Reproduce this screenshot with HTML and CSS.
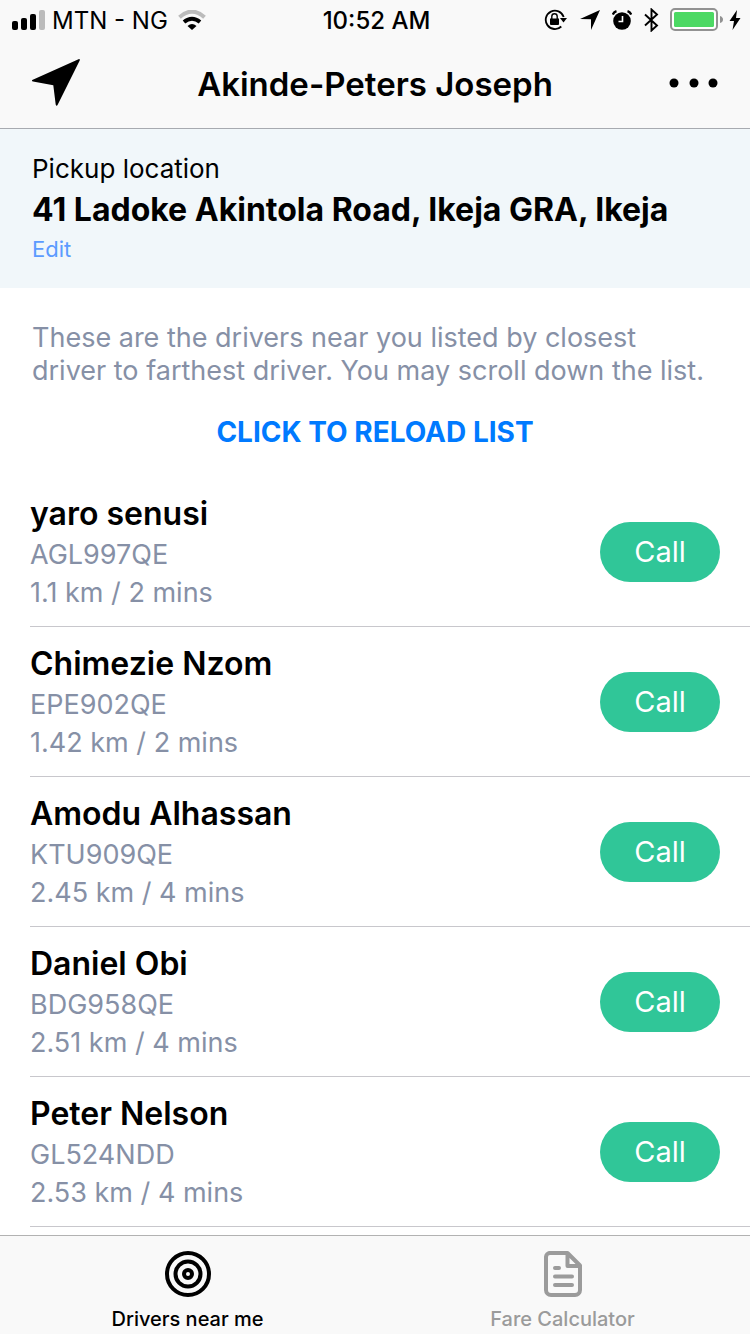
FILE: index.html
```
<!DOCTYPE html>
<html lang="en">
<head>
<meta charset="utf-8">
<meta name="viewport" content="width=device-width, initial-scale=1">
<title>Drivers near me</title>
<link rel="stylesheet" href="styles.css">
</head>
<body>
<div class="app">
  <header class="top">
    <div class="status">
      <div class="status-left">
        <svg class="icon" width="34" height="20" viewBox="0 0 34 20"><rect x="0" y="11" width="6" height="9" rx="2"/><rect x="9" y="8" width="6" height="12" rx="2"/><rect x="18" y="4" width="6" height="16" rx="2"/><rect x="27" y="0" width="6" height="20" rx="2" fill="#bbb"/></svg>
        <span>MTN - NG</span>
        <svg class="icon wifi" width="28" height="20" viewBox="0 0 28 20"><path d="M1.500 7.200Q14-4 26.500 7.200" fill="none" stroke="#bbb" stroke-width="4"/><path d="M6 12Q14 5.500 22 12" fill="none" stroke="#000" stroke-width="4"/><path d="M9.500 16Q14 12 18.500 16L14 20z"/></svg>
      </div>
      <time class="clock">10:52 AM</time>
      <div class="status-right">
        <svg class="icon" width="24" height="22" viewBox="0 0 24 22"><path d="M19.700 8A9.200 9.200 0 1 0 17.300 17.500" fill="none" stroke="#000" stroke-width="1.800"/><path d="M16 9h7l-3.500 4.500z"/><path d="M6 9.500h9V15a1 1 0 0 1-1 1H7a1 1 0 0 1-1-1z"/><path d="M7.800 10V7.500a2.700 2.700 0 0 1 5.400 0V10" fill="none" stroke="#000" stroke-width="1.400"/></svg>
        <svg class="icon arrow" width="20" height="20" viewBox="0 0 20 20"><path d="M20 0L11 20V9.300L0 9z"/></svg>
        <svg class="icon alarm" width="20" height="20" viewBox="0 0 20 20"><circle cx="10" cy="11" r="8.800"/><path d="M.800 4.500A6 6 0 0 1 4.500 1.200M19.200 4.500A6 6 0 0 0 15.500 1.200" fill="none" stroke="#000" stroke-width="2.400"/><path d="M10.500 6v5.500H6.500" fill="none" stroke="#fff" stroke-width="1.600"/></svg>
        <svg class="icon bluetooth" width="15" height="24" viewBox="0 0 15 24"><path d="M1 6.500L13 17.500 7.500 22.500V1.500L13 6.500 1 17.500" fill="none" stroke="#000" stroke-width="1.900"/></svg>
        <svg class="icon battery" width="54" height="24" viewBox="0 0 54 24"><rect x="1" y="1" width="46" height="21" rx="4" fill="#fff" stroke="#929292" stroke-width="2"/><rect x="4" y="4" width="40" height="15" rx="1.500" fill="#4cd964"/><path d="M50 8q3 1 3 3.500t-3 3.500z" fill="#929292"/></svg>
        <svg class="icon" width="12" height="20" viewBox="0 0 12 20"><path d="M8 0L.500 11H5L3.500 20 11.500 8H7z"/></svg>
      </div>
    </div>
    <div class="nav">
      <button class="nav-button" type="button" aria-label="My location"><svg class="icon" width="48" height="48" viewBox="0 0 48 48"><path d="M46.500.200Q48.200-.300 47.700 1.400L25.800 45.500Q24.500 48 23.700 45.500L21.300 26.300 1 22.600Q-1 21.800.800 20.800z"/></svg></button>
      <h1 class="title">Akinde-Peters Joseph</h1>
      <button class="nav-button" type="button" aria-label="More"><svg class="icon" width="50" height="10" viewBox="0 0 50 10"><circle cx="6" cy="5" r="4.500"/><circle cx="26" cy="5" r="4.500"/><circle cx="45" cy="5" r="4.500"/></svg></button>
    </div>
  </header>

  <main class="content">
    <section class="pickup">
      <p class="pickup-label">Pickup location</p>
      <p class="pickup-address">41 Ladoke Akintola Road, Ikeja GRA, Ikeja</p>
      <a class="pickup-edit" href="#edit">Edit</a>
    </section>
    <p class="hint">These are the drivers near you listed by closest driver to farthest driver. You may scroll down the list.</p>
    <button class="reload" type="button">CLICK TO RELOAD LIST</button>
    <ul class="drivers">
      <li class="driver"><div><h2 class="driver-name">yaro senusi</h2><p class="driver-info">AGL997QE</p><p class="driver-info">1.1 km / 2 mins</p></div><button class="call" type="button">Call</button></li>
      <li class="driver"><div><h2 class="driver-name">Chimezie Nzom</h2><p class="driver-info">EPE902QE</p><p class="driver-info">1.42 km / 2 mins</p></div><button class="call" type="button">Call</button></li>
      <li class="driver"><div><h2 class="driver-name">Amodu Alhassan</h2><p class="driver-info">KTU909QE</p><p class="driver-info">2.45 km / 4 mins</p></div><button class="call" type="button">Call</button></li>
      <li class="driver"><div><h2 class="driver-name">Daniel Obi</h2><p class="driver-info">BDG958QE</p><p class="driver-info">2.51 km / 4 mins</p></div><button class="call" type="button">Call</button></li>
      <li class="driver"><div><h2 class="driver-name">Peter Nelson</h2><p class="driver-info">GL524NDD</p><p class="driver-info">2.53 km / 4 mins</p></div><button class="call" type="button">Call</button></li>
    </ul>
  </main>

  <nav class="tabs">
    <a class="tab tab-active" href="#drivers">
      <svg width="48" height="48" viewBox="0 0 48 48" fill="none" stroke="currentColor" stroke-width="4"><circle cx="24" cy="24" r="21"/><circle cx="24" cy="24" r="12.500"/><circle cx="24" cy="24" r="4"/></svg>
      <span>Drivers near me</span>
    </a>
    <a class="tab" href="#fares">
      <svg width="48" height="48" viewBox="0 0 48 48" fill="none" stroke="currentColor" stroke-width="4" stroke-linecap="round" stroke-linejoin="round"><path d="M10 3h18.500L41 15.500V40a5 5 0 0 1-5 5H12a5 5 0 0 1-5-5V7a4 4 0 0 1 4-4zM28.500 3.500V16H41M16 18h4M16 26.500h17M16 35h17"/></svg>
      <span>Fare Calculator</span>
    </a>
  </nav>
</div>
</body>
</html>
```
FILE: styles.css
```
* {
  box-sizing: border-box;
}

body,
h1,
h2,
p,
ul {
  margin: 0;
  padding: 0;
}

body {
  font-family: Inter, "Liberation Sans", sans-serif;
  color: #000;
  background: #fff;
}

button {
  padding: 0;
  border: 0;
  background: none;
  font: inherit;
  color: inherit;
}

svg {
  display: block;
  flex: none;
}

.icon {
  fill: #000;
}

.app {
  display: flex;
  flex-direction: column;
  height: 100vh;
}

.top {
  flex: none;
  background: #f9f9f9;
  border-bottom: 1px solid #a7aab0;
}

.status {
  display: grid;
  grid-template-columns: 1fr auto 1fr;
  align-items: center;
  height: 40px;
  padding: 0 9px 0 12px;
  font-size: 24px;
}

.status-left,
.status-right {
  display: flex;
  align-items: center;
}

.status-left {
  gap: 6px;
}

.wifi {
  margin-left: 4px;
}

.status-right {
  justify-content: flex-end;
}

.arrow,
.alarm,
.bluetooth {
  margin-left: 12px;
}

.battery {
  margin: 0 5px 0 11px;
}

.clock {
  font-weight: 500;
}

.nav {
  display: grid;
  grid-template-columns: 1fr auto 1fr;
  align-items: center;
  height: 88px;
  padding: 0 32px;
}

.nav-button {
  justify-self: start;
  padding-bottom: 2px;
}

.nav-button:last-child {
  justify-self: end;
}

.title {
  font-size: 33px;
  font-weight: 600;
}

.content {
  display: flex;
  flex: 1;
  flex-direction: column;
  min-height: 0;
  overflow: hidden;
}

.pickup {
  flex: none;
  padding: 24px 32px;
  background: #f1f7fa;
}

.pickup-label {
  font-size: 26px;
  line-height: 32px;
}

.pickup-address {
  font-size: 32px;
  font-weight: 700;
  line-height: 50px;
}

.pickup-edit {
  display: block;
  font-size: 22px;
  line-height: 29px;
  color: #5c9bff;
  text-decoration: none;
}

.hint {
  padding: 33px 36px 0 32px;
  font-size: 27px;
  line-height: 33px;
  color: #8690a6;
}

.reload {
  align-self: center;
  margin: 28px 0;
  font-size: 28px;
  font-weight: 700;
  line-height: 34px;
  color: #007aff;
}

.drivers {
  list-style: none;
  padding-left: 30px;
}

.driver {
  display: flex;
  align-items: center;
  justify-content: space-between;
  min-height: 150px;
  padding-right: 30px;
  border-bottom: 1px solid #c8c7cc;
}

.driver-name {
  font-size: 32px;
  font-weight: 600;
  line-height: 44px;
}

.driver-info {
  font-size: 27px;
  line-height: 38px;
  color: #8690a6;
}

.call {
  width: 120px;
  height: 60px;
  border-radius: 30px;
  font-size: 29px;
  color: #fff;
  background: #30c698;
}

.tabs {
  display: flex;
  flex: none;
  background: #f9f9f9;
  border-top: 1px solid #b2b2b2;
}

.tab {
  display: flex;
  flex: 1;
  flex-direction: column;
  align-items: center;
  gap: 8px;
  padding: 14px 0 2px;
  font-size: 20px;
  font-weight: 500;
  line-height: 26px;
  color: #9b9b9b;
  text-decoration: none;
}

.tab-active {
  color: #000;
}
```
